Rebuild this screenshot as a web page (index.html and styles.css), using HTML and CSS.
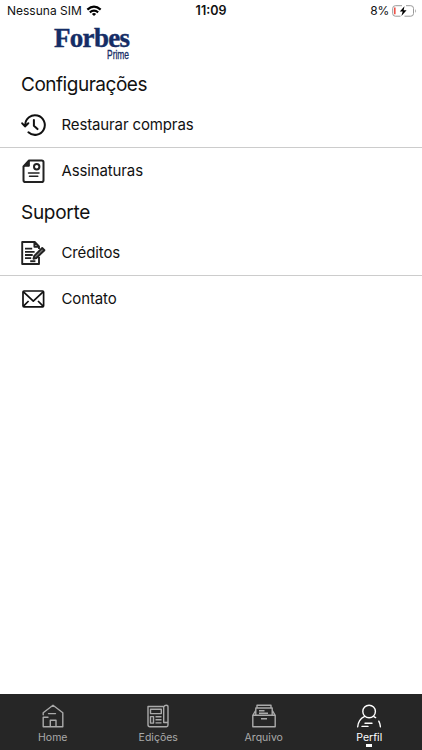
FILE: index.html
```html
<!DOCTYPE html>
<html lang="pt-BR">
<head>
<meta charset="utf-8">
<title>Forbes Prime</title>
<link rel="stylesheet" href="styles.css">
</head>
<body>
<div class="app">
  <header class="status">
    <div class="carrier"><span>Nessuna SIM</span>
      <svg width="16" height="12" viewBox="0 0 17 13" fill="none" stroke="#000" stroke-width="2.4"><path d="M1.3 5Q8.5-1.4 15.7 5M4 8Q8.5 4.1 13 8"/><path d="M6.2 9.7Q8.5 7.8 10.8 9.7L8.5 12Z" fill="#000" stroke="none"/></svg>
    </div>
    <div class="clock">11:09</div>
    <div class="power"><span>8%</span>
      <svg width="25" height="12" viewBox="0 0 25 12" fill="none"><path d="M10 .7H3.4Q.7.7.7 3.4V8.5Q.7 11.2 3.4 11.2H8.5M14 .7H18.8Q21.5.7 21.5 3.4V8.5Q21.5 11.2 18.8 11.2H12.5" stroke="#999"/><path d="M23.2 4Q25 6 23.2 8Z" fill="#999"/><path d="M2.8 2.6V9.3" stroke="#ee5148" stroke-width="1.6"/><path d="M12.5 1.2 7.8 6.6H10.7L9.4 11 14.6 5.2H11.6Z" fill="#000"/></svg>
    </div>
  </header>
  <div class="brand"><div class="forbes">Forbes</div><div class="prime">Prime</div></div>
  <main>
    <h2 class="config">Configurações</h2>
    <div class="row divided">
      <svg class="icon" viewBox="0 0 26 26" fill="none" stroke="#111" stroke-width="2" stroke-linecap="round" stroke-linejoin="round"><path d="M5.2 13A9.8 9.8 0 1 1 8.4 20.3M2.2 11.3 5 14.4 8.3 11.3M13.9 8V13.8L17.5 17.1"/></svg>
      <span class="restore">Restaurar compras</span>
    </div>
    <div class="row">
      <svg class="icon" viewBox="0 0 26 26" fill="none" stroke="#222" stroke-width="2" stroke-linejoin="round"><path d="M9 2.5H21.7Q23.5 2.5 23.5 4.3V22.2Q23.5 24 21.7 24H5.3Q3.5 24 3.5 22.2V8.4Z"/><path d="M9.3 3V8.2H4Z" fill="#222" stroke-width="1"/><circle cx="16.7" cy="8.8" r="2.7"/><path d="M8.5 14.9H19M9.5 18.3H17.8" stroke-width="1.5" stroke-linecap="round"/></svg>
      <span class="subs">Assinaturas</span>
    </div>
    <h2 class="support">Suporte</h2>
    <div class="row divided">
      <svg class="icon" viewBox="0 0 26 26" fill="none" stroke="#222" stroke-width="1.9" stroke-linejoin="round"><path d="M19 9V6.5L14.7 2H2.2V24H19V17M14.4 2.5V6.8H18.7"/><path d="M5 8.7H12.2M5 11.9H14.6M5 15H12.7M5 18.1H11.2" stroke-width="1.8"/><path d="M10.2 21.2H15.4"/><path d="M14.3 15.8 22.2 7.9 24.4 10.2 16.4 18 13.5 18.8Z" fill="#777"/></svg>
      <span class="credits">Créditos</span>
    </div>
    <div class="row">
      <svg class="icon" viewBox="0 0 26 26" fill="none" stroke="#111" stroke-width="1.7" stroke-linejoin="round"><rect x="3" y="5" width="20.6" height="15.8" rx="1"/><path d="M3.5 5.8 13.3 15.2 23.1 5.8M3.5 20.2 8.6 15M23.1 20.2 18 15"/></svg>
      <span class="contact">Contato</span>
    </div>
  </main>
  <nav class="tabs">
    <div class="tab">
      <svg viewBox="0 0 24 24" fill="none" stroke="#aaa" stroke-width="1.4" stroke-linejoin="round" stroke-linecap="round"><path d="M2.2 10.7V8.8L12 1.2 21.8 8.8V22.8H2.2V13.2H7M7.5 9.6H14.5M9.3 22.5V16.2H15V22.5"/></svg>
      <span class="t-home">Home</span>
    </div>
    <div class="tab">
      <svg viewBox="0 0 24 24" fill="none" stroke="#aaa" stroke-width="1.4" stroke-linejoin="round"><path d="M17.7 2.5H2V20.8Q2 22.7 4 22.7H20.5Q22 22.7 22 21V2.8Q22 1.2 20.3 1.2T17.7 3V18.5H21.5"/><rect x="4.5" y="5.2" width="10.8" height="4.4"/><rect x="4.5" y="12.6" width="3" height="6.5"/><path d="M9.5 12.7H15.5M9.5 15.8H15.5M9.5 18.9H15.5"/></svg>
      <span class="t-editions">Edições</span>
    </div>
    <div class="tab">
      <svg viewBox="0 0 24 24" fill="none" stroke="#aaa" stroke-width="1.4" stroke-linejoin="round"><path d="M.8 11.2H23.2V22.7H.8ZM1 11 3.8 6.3M23 11 20.2 6.3M3.8 10.8V4H20.2V10.8M5 3.8V1.3H19V3.8M7 6.8H12.5M7 9.2H16M9 14.8H15"/></svg>
      <span class="t-archive">Arquivo</span>
    </div>
    <div class="tab active">
      <svg viewBox="0 0 24 24" fill="none" stroke="#fff" stroke-width="1.4" stroke-linecap="round"><circle cx="12.1" cy="7.5" r="6.3"/><path d="M7.3 12.6Q1.3 15.5.7 22.8M16.9 12.6 18.6 13.6M21.8 17.2Q23.1 19.6 23.4 22.8M8 19.3H15M5 22.4H11"/></svg>
      <span class="t-profile">Perfil</span>
    </div>
  </nav>
</div>
</body>
</html>
```
FILE: styles.css
```css
* { box-sizing: border-box; }
body { margin: 0; background: #fff; color: #111; font-family: Inter, sans-serif; }
.app { width: 422px; height: 750px; display: flex; flex-direction: column; overflow: hidden; }
.status { height: 22px; flex: none; display: grid; grid-template-columns: 1fr auto 1fr; align-items: center; padding: 0 5px 0 7px; font-size: 12px; line-height: 22px; }
.carrier, .power { display: flex; align-items: center; gap: 4px; letter-spacing: 0; }
.power { justify-content: flex-end; gap: 3px; letter-spacing: -.2px; }
.clock { font-weight: 600; font-size: 12.5px; margin-right: 2px; }
.brand { height: 44px; flex: none; width: 130px; padding-top: 6px; color: #152d66; }
.forbes { margin-left: 54px; height: 21px; font: bold 27px/21px "Liberation Serif", serif; letter-spacing: -.7px; -webkit-text-stroke: .4px #152d66; }
.prime { height: 10px; font: 12px/10px "Liberation Sans", sans-serif; -webkit-text-stroke: .3px #152d66; text-align: right; transform: scale(.7, 1.05); transform-origin: right; margin: 1px 1px 0 0; }
main { flex: 1; }
h2 { margin: 0; height: 36px; padding-left: 21px; font-size: 19px; line-height: 37px; font-weight: 400; letter-spacing: -.48px; }
.support { letter-spacing: -.3px; }
.row { height: 46px; display: flex; align-items: center; padding-left: 20px; font-size: 15px; letter-spacing: -.13px; }
.row span { margin-top: -1px; }
.divided span { margin-top: 0; }
.divided { border-bottom: 1px solid #ccc; }
.icon { width: 26px; height: 26px; margin-right: 15.5px; flex: none; }
.tabs { height: 56px; flex: none; display: grid; grid-template-columns: repeat(4, 1fr); background: #262626; color: #aaa; }
.tab { display: flex; flex-direction: column; align-items: center; padding-top: 10px; font-size: 10.5px; line-height: 16px; letter-spacing: .02px; }
.tab svg { width: 24px; height: 24px; margin-bottom: 2px; }
.active { color: #fff; }
.active::after { content: ""; width: 6px; height: 3px; margin-top: -2px; background: #fff; }
```
